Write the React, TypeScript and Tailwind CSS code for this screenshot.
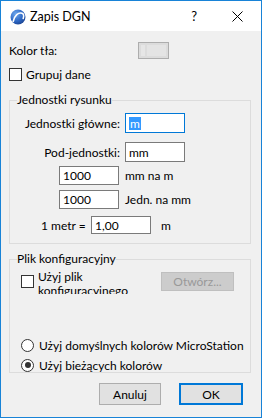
import React from 'react';

const font = "font-['Lato',sans-serif] text-[12px] leading-[15px] text-black";

const Logo = () => (
  <svg width="16" height="16" viewBox="0 0 16 16">
    <defs>
      <radialGradient id="lg" cx="0.35" cy="0.3" r="0.8">
        <stop offset="0" stopColor="#6fa8ec" />
        <stop offset="0.6" stopColor="#2d67c4" />
        <stop offset="1" stopColor="#1a3f8a" />
      </radialGradient>
    </defs>
    <circle cx="8" cy="8" r="7.5" fill="url(#lg)" />
    <path d="M3.2 12.5 C4.5 6 8.5 3.2 12 4.2 C13.6 4.8 14 7 13.2 9.5" fill="none" stroke="#fff" strokeWidth="1.6" strokeLinecap="round" />
  </svg>
);

const CloseIcon = () => (
  <svg width="11" height="11" viewBox="0 0 11 11">
    <path d="M0.5 0.5 L10.5 10.5 M10.5 0.5 L0.5 10.5" stroke="#000" strokeWidth="1" />
  </svg>
);

const Input = ({ value, w = 'w-[60px]', h = 'h-[20px]', focused = false }: any) => (
  <div
    className={`${w} ${h} bg-white border ${focused ? 'border-[#0078d7]' : 'border-[#7a7a7a]'} flex items-center pl-[3px]`}
  >
    {focused ? <span className="bg-[#3399ff] text-white px-[1px] leading-[13px]">{value}</span> : <span>{value}</span>}
  </div>
);

const Check = () => <div className="w-[13px] h-[13px] border border-[#333] bg-white shrink-0" />;

const Radio = ({ on = false }: any) => (
  <div className="w-[13px] h-[13px] rounded-full border border-[#333] bg-white shrink-0 flex items-center justify-center">
    {on && <div className="w-[6px] h-[6px] rounded-full bg-[#333]" />}
  </div>
);

export default function App() {
  return (
    <div className={`${font} w-[262px] h-[418px] border border-[#1883d7] flex flex-col bg-[#f0f0f0]`}>
      {/* title bar */}
      <div className="h-[30px] bg-white flex items-center shrink-0">
        <div className="ml-[9px] mt-[1px]">
          <Logo />
        </div>
        <span className="ml-[4px] text-[12.5px]">Zapis DGN</span>
        <span className="ml-auto text-[13px] mr-[35px]">?</span>
        <div className="mr-[18px] flex items-center">
          <CloseIcon />
        </div>
      </div>

      <div className="flex items-center h-[17px] mt-[11px] pl-[8px] shrink-0">
        <span className="w-[129px]">Kolor tła:</span>
        <div className="w-[31px] h-[17px] border border-[#adadad] bg-[#dcdcdc] p-[2px] flex gap-[2px]">
          <div className="w-[4px] bg-[#e6e6e6]" />
          <div className="flex-1 bg-[#e4e4e4]" />
        </div>
      </div>

      <div className="flex items-center h-[15px] mt-[8px] pl-[8px] gap-[4px] shrink-0">
        <Check />
        <span>Grupuj dane</span>
      </div>

      <fieldset className="ml-[8px] w-[242px] mt-[10px] border border-[#dcdcdc] pb-[9px] shrink-0">
        <legend className="ml-[7px] leading-[16px]">Jednostki rysunku</legend>
        <div className="flex items-center mt-[5px] gap-[5px]">
          <span className="w-[110px] text-right">Jednostki główne:</span>
          <Input value="m" focused />
        </div>
        <div className="flex items-center mt-[9px] gap-[5px]">
          <span className="w-[110px] text-right">Pod-jednostki:</span>
          <Input value="mm" />
        </div>
        <div className="flex items-center mt-[4px] gap-[5px]">
          <div className="w-[110px] flex justify-end pr-[1px]">
            <Input value="1000" h="h-[19px]" />
          </div>
          <span>mm na m</span>
        </div>
        <div className="flex items-center mt-[5px] gap-[5px]">
          <div className="w-[110px] flex justify-end pr-[1px]">
            <Input value="1000" h="h-[19px]" />
          </div>
          <span>Jedn. na mm</span>
        </div>
        <div className="flex items-center mt-[7px] pl-[31px]">
          <span className="w-[50px]">1 metr =</span>
          <Input value="1,00" h="h-[18px]" />
          <span className="ml-[10px]">m</span>
        </div>
      </fieldset>

      <fieldset className="ml-[8px] w-[242px] mt-[7px] border border-[#dcdcdc] shrink-0">
        <legend className="ml-[7px] leading-[16px]">Plik konfiguracyjny</legend>
        <div className="flex items-start mt-[5px] pl-[11px] h-[22px]">
          <div className="mt-[3px]">
            <Check />
          </div>
          <div className="ml-[4px] w-[100px] h-[22px] overflow-hidden">
            <div className="leading-[14px] -mt-[2px]">Użyj plik konfiguracyjnego</div>
          </div>
          <div className="ml-[23px] w-[73px] h-[19px] bg-[#cccccc] border border-[#bfbfbf] text-[#999] flex items-center justify-center">
            Otwórz...
          </div>
        </div>
        <div className="flex items-center mt-[44px] pl-[11px] gap-[5px] h-[14px]">
          <Radio />
          <span>Użyj domyślnych kolorów MicroStation</span>
        </div>
        <div className="flex items-center mt-[6px] pl-[11px] gap-[5px] h-[14px]">
          <Radio on />
          <span>Użyj bieżących kolorów</span>
        </div>
      </fieldset>

      <div className="flex justify-end mt-[10px] mr-[18px] gap-[18px] shrink-0">
        <div className="w-[62px] h-[22px] bg-[#e1e1e1] border border-[#adadad] flex items-center justify-center">Anuluj</div>
        <div className="w-[64px] h-[22px] bg-[#e1e1e1] border-2 border-[#0078d7] flex items-center justify-center">OK</div>
      </div>
    </div>
  );
}
